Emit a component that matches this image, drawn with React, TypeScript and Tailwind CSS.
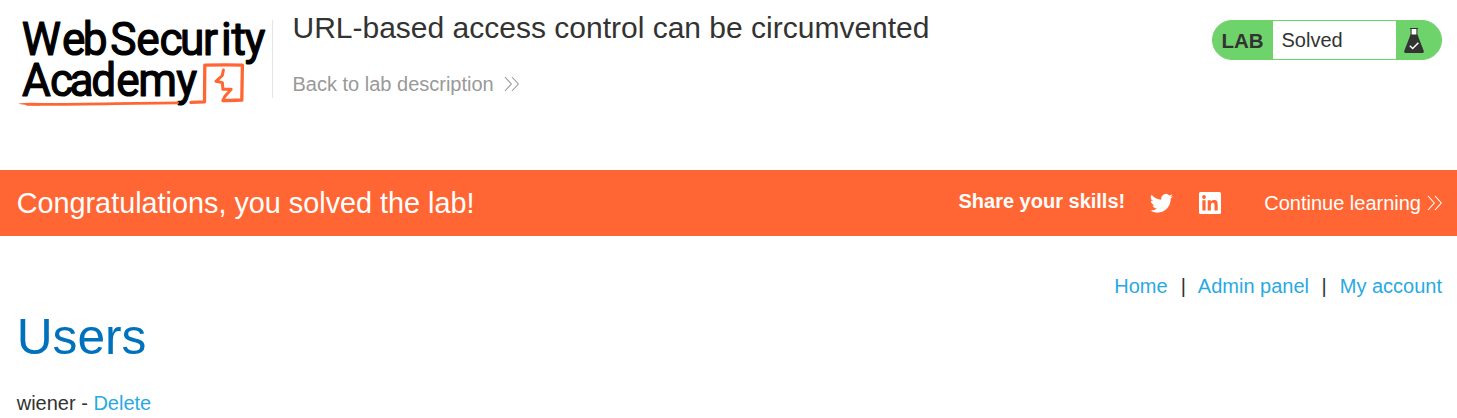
import type { ReactNode } from "react";

function DoubleChevron({ className }: { className?: string }) {
  return (
    <svg viewBox="0 0 16 16" className={className} fill="none" stroke="currentColor" strokeWidth="1.1">
      <path d="M1 1 7.3 8 1 15M8 1l6.3 7L8 15" />
    </svg>
  );
}

function Logo() {
  return (
    <svg width="272" height="120" viewBox="0 0 272 120" className="overflow-visible" role="img" aria-label="Web Security Academy">
      <g
        transform="scale(.94 1)"
        fontFamily="Roboto, 'Liberation Sans', sans-serif"
        fontSize="47"
        fontWeight="400"
        fill="#000"
        stroke="#000"
        strokeWidth="1.2"
        strokeLinejoin="round"
      >
        <text x="23.2 66 88.1" y="55.4">Web</text>
        <text x="117.4 145 169.7 191.6 216 235.1 246.4 260.2" y="55.4">Security</text>
        <text x="23.3 53.1 73.9 97.1 123.7 147.2 187.6" y="96.5">Academy</text>
      </g>
      <g fill="none" stroke="#ff6633" strokeLinecap="round" strokeLinejoin="round">
        <path d="M27 104.3C70 104.9 130 103 177.5 102.8" strokeWidth="2.7" />
        <path d="M191 102.4 204.5 101.8 204.8 65.2C217 64.8 230 64.5 242.4 65.2L241.8 100.1C236 100.3 229 100.3 223.2 100.7" strokeWidth="3.3" />
        <path d="M223.4 70 222.3 75.5 215.9 81.3 222.4 82.6 222.9 89.3H231.2L225 96.2 223 100.5" strokeWidth="3" />
      </g>
      <path d="M18 103.8Q25 102.5 40 103V105.4Q27 105.5 18 103.8Z" fill="#ff6633" />
    </svg>
  );
}

function Flask() {
  return (
    <svg width="22" height="28" viewBox="0 0 22 28">
      <path d="M8 2h6v8H8z" fill="#fff" />
      <path d="M7 1.5h8M8.1 1v9M13.9 1v9" stroke="#333332" strokeWidth="1" fill="none" />
      <path d="M7.6 7.5h6.8L20.7 23.7Q21.2 26 19 26H3Q.8 26 1.3 23.7Z" fill="#333332" />
      <path d="M6.8 18.7 9.7 21.5 15.4 15.7" fill="none" stroke="#fff" strokeWidth="1.5" />
    </svg>
  );
}

function Twitter() {
  return (
    <svg width="24" height="24" viewBox="0 0 25 25" fill="currentColor">
      <path d="M23.95 4.57a10 10 0 0 1-2.82.78 4.96 4.96 0 0 0 2.16-2.73c-.95.56-2 .96-3.13 1.19a4.92 4.92 0 0 0-8.38 4.48A13.93 13.93 0 0 1 1.64 3.16a4.92 4.92 0 0 0 1.52 6.57 4.9 4.9 0 0 1-2.23-.61v.06a4.92 4.92 0 0 0 3.95 4.83 5 5 0 0 1-2.21.08 4.94 4.94 0 0 0 4.6 3.42A9.87 9.87 0 0 1 0 19.54a13.99 13.99 0 0 0 7.55 2.21c9.05 0 14-7.5 14-13.98l-.02-.64a9.94 9.94 0 0 0 2.42-2.56z" transform="translate(0 .8)" />
    </svg>
  );
}

function LinkedIn() {
  return (
    <svg width="22" height="22" viewBox="0 0 22 22">
      <rect width="22" height="22" rx="1.5" fill="#fff" />
      <path d="M3.4 8.3h3.2v10.3H3.4zM8.7 8.3h3.1v1.4c.6-1 1.7-1.7 3.2-1.7 3.1 0 3.7 2 3.7 4.8v5.8h-3.2v-5.1c0-1.3 0-2.8-1.7-2.8s-1.9 1.3-1.9 2.7v5.2H8.7z" fill="#ff6633" />
      <circle cx="5" cy="5" r="1.9" fill="#ff6633" />
    </svg>
  );
}

function NavLink({ children }: { children: ReactNode }) {
  return <a href="#" className="text-[#29a9e2]">{children}</a>;
}

export default function App() {
  return (
    <div className="h-[418px] overflow-hidden bg-white font-['Liberation_Sans',Arial,sans-serif] text-[20px] leading-[24px] text-[#333332]">
      <header className="flex h-[170px] items-start pr-[15px]">
        <Logo />
        <div className="mt-5 h-[78px] w-px bg-[#e5e5e5]" />
        <div className="ml-[19.5px] flex flex-1 flex-col">
          <h1 className="mt-[10px] text-[30px] leading-[36px]">URL-based access control can be circumvented</h1>
          <a href="#" className="mt-[26px] flex items-center text-[#999]">
            Back to lab description
            <DoubleChevron className="ml-[10.5px] h-4 w-4" />
          </a>
        </div>
        <div className="mt-5 flex h-10 w-[230px] overflow-hidden rounded-[20px] border border-[#6fd36c] bg-[#6fd36c]">
          <span className="w-[60px] pl-[8.5px] pt-[7.5px] text-[20.5px] font-bold">LAB</span>
          <span className="w-[123px] bg-white pl-[8.5px] pt-[7px]">Solved</span>
          <span className="pl-[7px] pt-[6px]"><Flask /></span>
        </div>
      </header>
      <section className="flex h-[66px] items-center bg-[#ff6633] pl-[16.7px] pr-[14px] text-white">
        <h2 className="flex-1 text-[28.8px] leading-[34px]">Congratulations, you solved the lab!</h2>
        <span className="mb-[4px] font-bold">Share your skills!</span>
        <span className="ml-[25px]"><Twitter /></span>
        <span className="ml-[25px]"><LinkedIn /></span>
        <a href="#" className="ml-[43px] flex items-center">
          Continue learning
          <DoubleChevron className="ml-[6px] h-4 w-4" />
        </a>
      </section>
      <main className="flex flex-col pl-[16.7px] pr-[15px]">
        <nav className="mt-[38px] flex justify-end">
          <NavLink>Home</NavLink>
          <span className="ml-[13px] mr-[12px]">|</span>
          <NavLink>Admin panel</NavLink>
          <span className="ml-[12.5px] mr-[13px]">|</span>
          <NavLink>My account</NavLink>
        </nav>
        <h1 className="mt-[9px] text-[49.7px] leading-[60px] text-[#0071bc]">Users</h1>
        <p className="mt-[24px]">wiener - <NavLink>Delete</NavLink></p>
      </main>
    </div>
  );
}
